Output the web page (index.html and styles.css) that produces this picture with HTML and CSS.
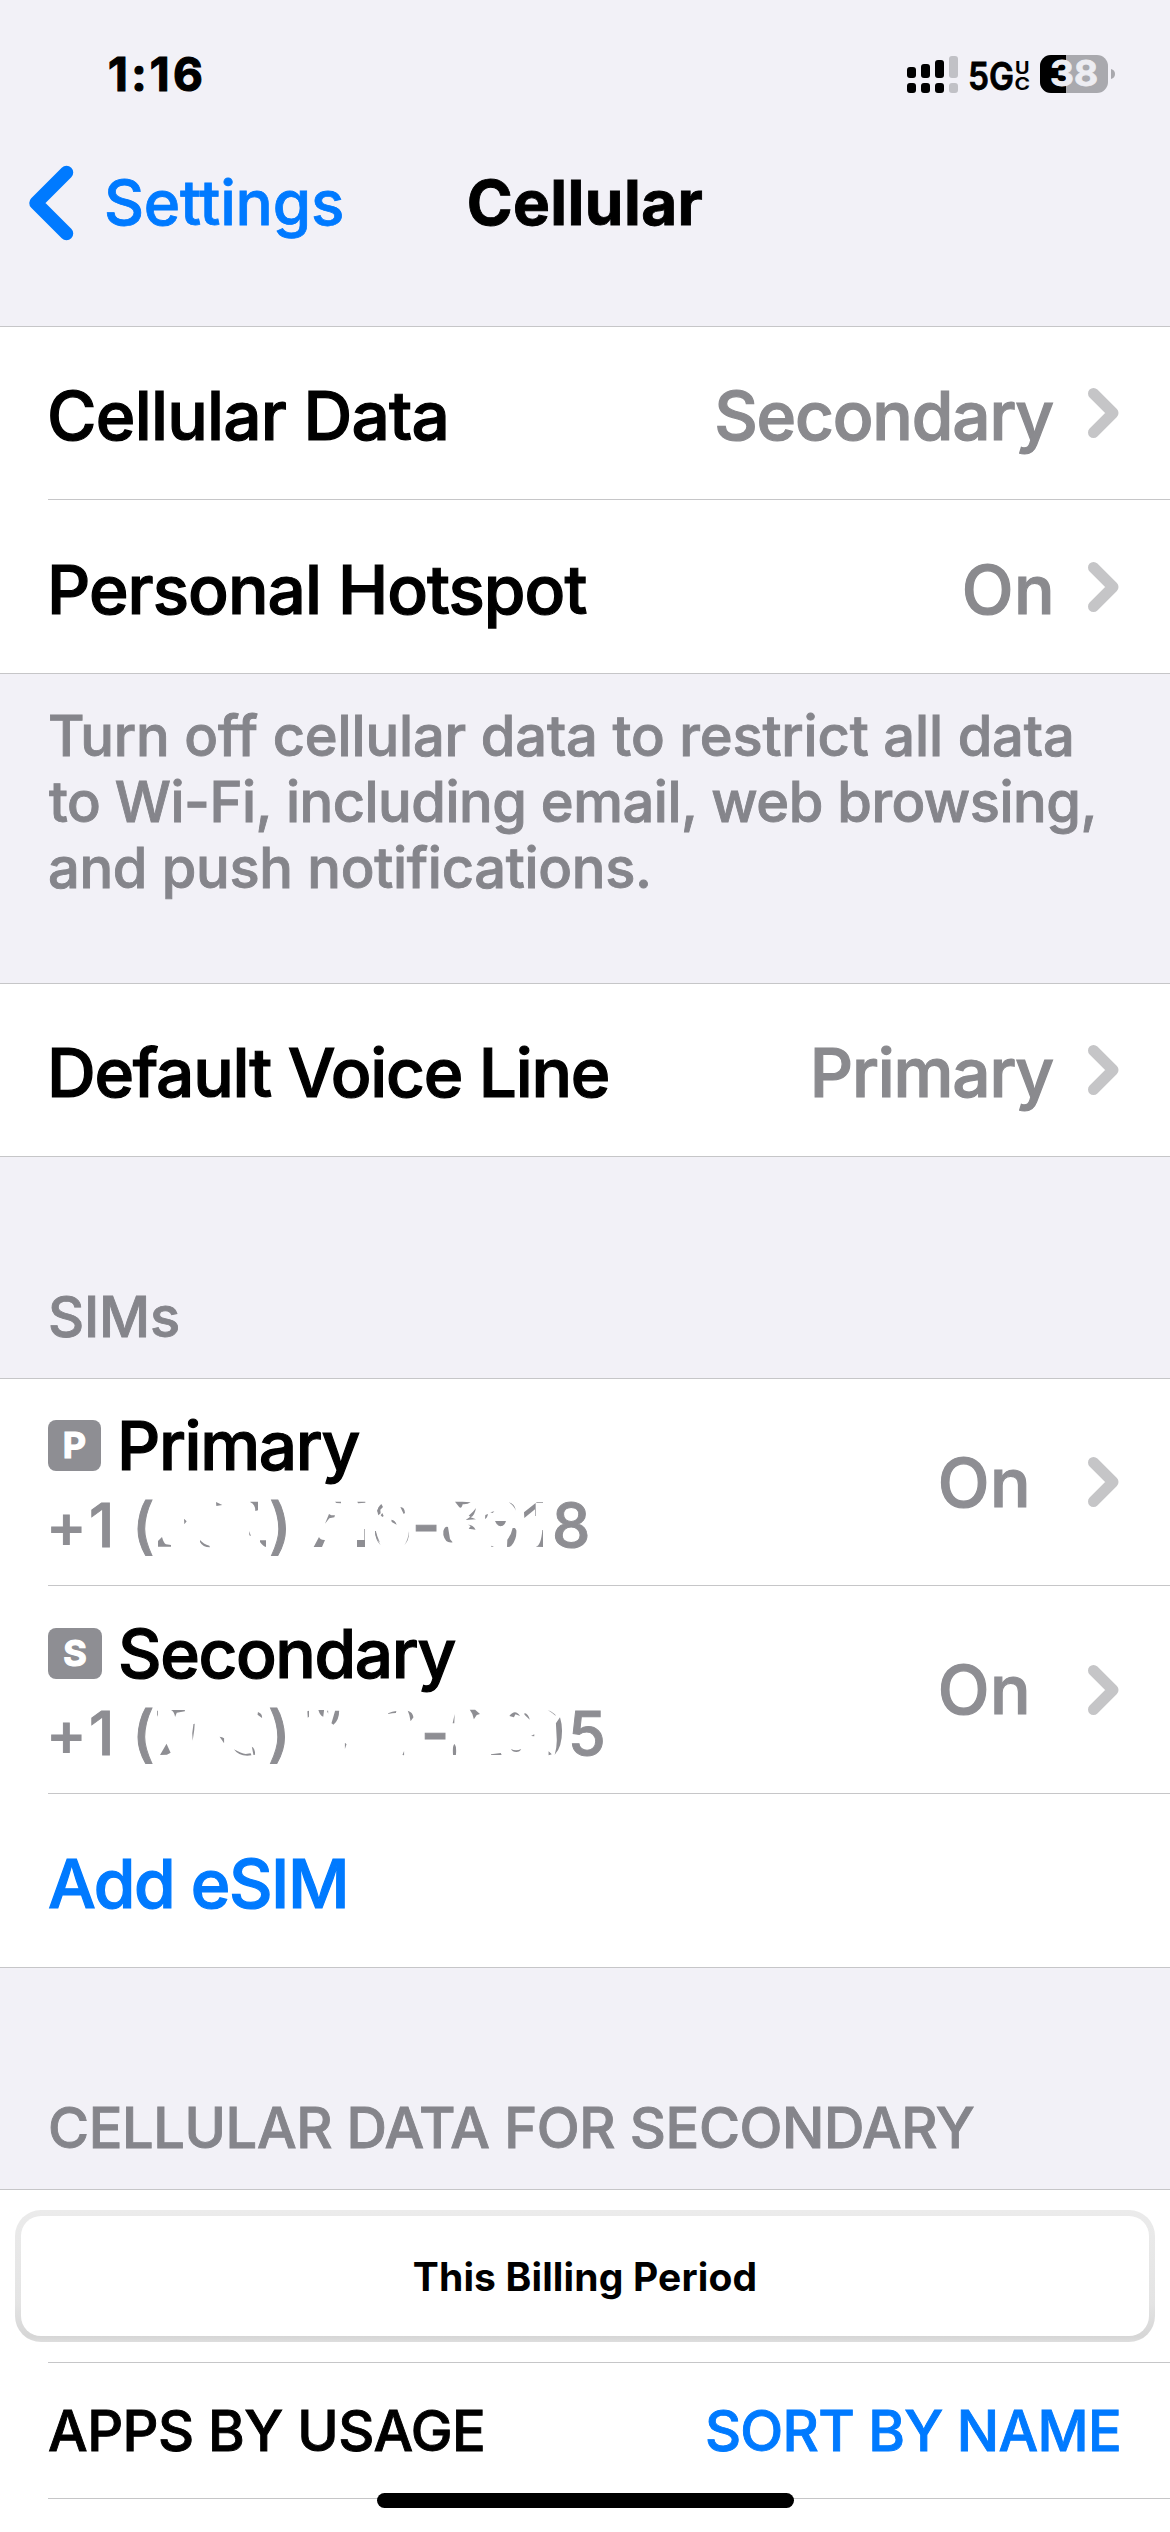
FILE: index.html
```html
<!DOCTYPE html>
<html lang="en">
<head>
<meta charset="utf-8">
<title>Cellular</title>
<link rel="stylesheet" href="styles.css">
</head>
<body>
<svg width="0" height="0" class="defs">
  <symbol id="chevron" viewBox="0 0 31 50"><path d="M5.5 5.5 25 25 5.5 44.500" fill="none" stroke="#c5c5c7" stroke-width="11" stroke-linecap="round" stroke-linejoin="round"/></symbol>
</svg>
<main class="screen">
  <header>
    <div class="status">
      <span class="time">1:16</span>
      <svg class="status-icons" width="210" height="40" viewBox="906 54 210 40">
        <g fill="#000">
          <rect x="907" y="67" width="9" height="11" rx="3"/><rect x="921" y="64" width="9" height="14" rx="3"/><rect x="935" y="60" width="9" height="18" rx="3"/>
          <rect x="907" y="83" width="9" height="10" rx="3"/><rect x="921" y="83" width="9" height="10" rx="3"/><rect x="935" y="83" width="9" height="10" rx="3"/>
        </g>
        <g fill="#c1c1c6"><rect x="949" y="56" width="9" height="22" rx="3"/><rect x="949" y="83" width="9" height="10" rx="3"/></g>
        <text x="968" y="90" class="net" textLength="46" lengthAdjust="spacingAndGlyphs">5G</text>
        <text x="1015" y="73.500" class="net-sub" textLength="14.500" lengthAdjust="spacingAndGlyphs">U</text>
        <text x="1014.500" y="89.500" class="net-sub" textLength="15.500" lengthAdjust="spacingAndGlyphs">C</text>
        <rect x="1040" y="55" width="68" height="38" rx="11" fill="#a9a9ae"/>
        <path d="M1066 55H1051a11 11 0 0 0-11 11v16a11 11 0 0 0 11 11h15z" fill="#000"/>
        <path d="M1111 69q4 1 4 5t-4 5z" fill="#a9a9ae"/>
        <text x="1050" y="86" class="level" textLength="48" lengthAdjust="spacingAndGlyphs">38</text>
      </svg>
    </div>
    <nav class="nav">
      <a class="back">
        <svg width="44" height="74" viewBox="0 0 44 74"><path d="M37.500 6.500 7 37l30.500 30.500" fill="none" stroke="#007aff" stroke-width="13.500" stroke-linecap="round" stroke-linejoin="round"/></svg>
        <span>Settings</span>
      </a>
      <h1>Cellular</h1>
      <i></i>
    </nav>
  </header>

  <section class="group">
    <div class="row line"><span class="label s1">Cellular Data</span><span class="value s2">Secondary</span><svg class="chev"><use href="#chevron"/></svg></div>
    <div class="row"><span class="label s3">Personal Hotspot</span><span class="value s4">On</span><svg class="chev"><use href="#chevron"/></svg></div>
  </section>

  <p class="note">
    <span class="n1">Turn off cellular data to restrict all data</span>
    <span class="n2">to Wi-Fi, including email, web browsing,</span>
    <span class="n3">and push notifications.</span>
  </p>

  <section class="group">
    <div class="row short"><span class="label s5">Default Voice Line</span><span class="value s2">Primary</span><svg class="chev"><use href="#chevron"/></svg></div>
  </section>

  <h2>SIMs</h2>
  <section class="group">
    <div class="row sim line">
      <div class="who">
        <div class="name"><b class="badge">P</b><span class="pn">Primary</span></div>
        <svg class="phone" width="600" height="79" viewBox="48 1485 600 79">
          <text x="46" y="1546.500" class="plus">+1</text><text x="132" y="1546.500">(</text><text x="269" y="1546.500">)</text><text x="412" y="1546.500">-</text><text x="552" y="1546.500">8</text>
          <g class="marks" transform="translate(120 1495) scale(.33333)">
            <path d="M114 155v-17l12-12q5 18 12 22l15 2v5zM240 135q10 12 28 17l2 5q-22 0-30-16zM288 21l19 9-18 3zM391 20h23v26l-8 2q0-20-15-26zM192 71l8 8-7 9zM387 108l6 15-5-2zM420 136h18v20q-8-2-18-15zM581 156l16-30q4 10 18 9l-9 21zM615 86l12-29 7 4 11 0-2 6-15 3zM645 20h18v5l-14-1zM712 20h24v3l-22 2zM711 135h22v-33h2v54h-24zM777 36l-6 12 7 7zM765 108q0 20 15 35-8-17-13-35zM134 54l4 5zM240 46l4 5zM433 71l4 4z"/>
          </g>
          <g class="marks" transform="translate(350 1495) scale(.33333)">
            <path d="M83 53q-3-13 11-26l5 9-8 8 1 11-7 6zM92 61l5-7 4 9-4 3zM124 74q12 2 16 15l-15-8zM151 36q13 0 14 18l-4 3zM75 108q0 26 17 43-14-23-14-43zM163 151q16-18 14-42-2 24-14 42zM280 108q5-16 14-12l6 36 8 10q-22 4-28-22zM315 20h22l25 2q-9 7-24 6-3 14-10 9zM356 62q16-14 22-23-4 23-16 28l16 6-31 2 14-10zM354 89q15 0 23 15l-21-3 6-8zM405 72l1-12 8-3q-2 12-9 15zM421 52l12-3-5 5zM435 78h33q-4 15-17 16-11-2-16-16zM476 22q18 4 22 25-9-18-22-25zM472 134q12-15 16-35h7l4 7q2 26-15 46-7 6-13 3zM522 52l35-28v39h-2V43l-32 26zM559 21h20v2h-20zM557 155q16-2 20-50h2v51zM424 152l8 3-8 1z"/>
          </g>
        </svg>
      </div>
      <span class="value s4">On</span><svg class="chev"><use href="#chevron"/></svg>
    </div>
    <div class="row sim second line">
      <div class="who">
        <div class="name"><b class="badge wide">S</b><span class="sn">Secondary</span></div>
        <svg class="phone" width="600" height="79" viewBox="48 1693 600 79">
          <text x="46" y="1755" class="plus">+1</text><text x="132" y="1755">(</text><text x="268" y="1755">)</text><text x="421" y="1755">-</text><text x="568" y="1755">5</text>
          <g class="marks" transform="translate(0 1580) scale(.40816 .33333)">
            <path d="M385 392l2 0v18l-2-6zM419 390h34v4l-20 4-4 13q-2-16-10-21zM471 460l3-28 3-1-1 18-4 33zM392 525l16-34 10 27-9 6zM538 470l11 20v-15l-5-3zM528 516l4 4zM573 508q18 12 29 14l12-2 2 6q-30 5-43-18zM617 500q8 4 8 24l-4 1zM632 396q11 5 10 18l-11-10zM753 394l4-2v18l-3 3zM780 390h14l-2 20q-8-3-12-20zM801 392h3v9zM812 430l9-38h10q0 28-14 42zM846 410l-5 25zM845 488l4 5-4 14zM870 415l4 3zM951 400q10-6 20-7l-1 6q-9 0-19 3zM999 392q12 4 14 20l-7 12q-2-20-7-32zM1025 486l2 15zM960 518l5 7zM986 525l4-12v13zM1109 430l5-28-1 28zM1110 525q-2-30 4-33 5 8 3 33zM1151 389h13l12 13-8 3-7 13q-2-17-10-29zM1191 405l4 2zM1218 410l-4 6zM1203 523l24-4 2 6h-26zM1248 408q14-22 26 0l-11-5-4 9zM1252 507q12 8 25 0-3 9-12 9-10 0-13-9zM1285 399q10 3 13 20l-13-15zM1301 468l8-5v6zM1344 514l8 9-8 3zM1342 390q18 10 20 18-12-12-20-18zM1362 430l10-18q5 20 5 40 0 50-18 72 6-25 5-48z"/>
          </g>
        </svg>
      </div>
      <span class="value s4">On</span><svg class="chev"><use href="#chevron"/></svg>
    </div>
    <div class="row"><a class="label s6">Add eSIM</a></div>
  </section>

  <h2 class="caps">CELLULAR DATA FOR SECONDARY</h2>
  <section class="group last">
    <div class="period"><span>This Billing Period</span></div>
    <div class="usage"><span class="u1">APPS BY USAGE</span><a class="u2">SORT BY NAME</a></div>
  </section>
  <div class="home"></div>
</main>
</body>
</html>
```
FILE: styles.css
```css
* { box-sizing: border-box; margin: 0; padding: 0; }
body { background: #f2f1f7; font-family: Inter, "Liberation Sans", sans-serif; color: #000; }
svg { display: block; flex: none; overflow: visible; }
.defs { position: absolute; }
.screen { position: relative; width: 1170px; height: 2532px; overflow: hidden; display: flex; flex-direction: column; }

.status { height: 148px; padding: 0 54px 0 108px; display: flex; align-items: center; justify-content: space-between; }
.time { font-size: 46px; font-weight: 700; letter-spacing: 3.3px; -webkit-text-stroke: 1.2px; }
.net { font-size: 38px; font-weight: 600; stroke: #000; stroke-width: .8px; }
.net-sub { font-size: 17px; font-weight: 700; }
.level { font-size: 35px; font-weight: 700; fill: #ededf2; stroke: #ededf2; stroke-width: .8px; }

.nav { height: 178px; padding: 0 29px; display: grid; grid-template-columns: 1fr auto 1fr; align-items: start; line-height: 110px; }
.back { display: flex; align-items: center; gap: 31px; color: #007aff; font-size: 62px; font-weight: 500; letter-spacing: -.2px; -webkit-text-stroke: .8px; }
h1 { font-size: 62px; font-weight: 700; letter-spacing: .45px; -webkit-text-stroke: .9px; }

.group { background: #fff; border-top: 1px solid #c6c6c8; border-bottom: 1px solid #c6c6c8; padding-left: 48px; flex: none; }
.row { height: 173px; padding-right: 51px; display: flex; align-items: center; font-size: 67.5px; font-weight: 500; -webkit-text-stroke: 1.2px; }
.row.short { height: 172px; }
.line { border-bottom: 1px solid #c6c6c8; }
.label { margin-left: -1px; padding-top: 5px; }
a.label { margin-left: 0; color: #007aff; }
.value { margin-left: auto; margin-right: 35px; padding-top: 5px; color: #8a8a8e; }
.value.s4 { margin-right: 33px; }
.chev { width: 31px; height: 50px; }
.s1 { letter-spacing: -.75px; }
.s2 { letter-spacing: -1.2px; }
.s3 { letter-spacing: -.97px; }
.s4 { letter-spacing: .4px; }
.s5 { letter-spacing: -1.25px; }
.s6 { letter-spacing: -1.5px; }

.note { height: 309px; padding: 29px 0 0 48px; font-size: 56px; font-weight: 500; line-height: 66px; color: #85858b; -webkit-text-stroke: .9px; flex: none; }
.note span { display: block; white-space: nowrap; }
.n1 { letter-spacing: -.16px; }
.n2 { letter-spacing: -.5px; padding-left: 1px; }
.n3 { letter-spacing: -.31px; }

h2 { height: 221px; padding: 0 0 28px 48px; display: flex; align-items: flex-end; font-size: 56px; font-weight: 500; line-height: 66px; letter-spacing: -.2px; color: #85858b; -webkit-text-stroke: .9px; flex: none; }
h2.caps { letter-spacing: -.4px; }

.sim { height: 207px; }
.sim.second { height: 208px; }
.who { height: 158px; align-self: flex-start; margin-top: 27px; }
.second .who { margin-top: 28px; }
.sim .value { margin-right: 57px; padding-top: 0; color: #8e8e93; }
.name { height: 79px; display: flex; align-items: center; line-height: 79px; }
.badge { width: 53px; height: 51px; margin-right: 16px; border-radius: 8px; background: #8e8e93; color: #fff; font-size: 36px; font-weight: 700; line-height: 51px; text-align: center; }
.badge.wide { width: 54px; }
.pn { letter-spacing: -1.35px; }
.sn { letter-spacing: -1.42px; }
.phone { font-size: 61px; font-weight: 500; fill: #8e8e93; }
.phone text { stroke: #8e8e93; stroke-width: 1px; -webkit-text-stroke: 0; }
.plus { letter-spacing: 2.3px; }

.last { border-bottom: 0; height: 343px; padding-left: 0; }
.period { margin: 20px 15px; height: 132px; padding: 6px; border-radius: 26px; background: linear-gradient(#ebebeb, #e4e4e4 70%, #d6d6d6 96%, #dedede); }
.period span { display: flex; align-items: center; justify-content: center; height: 120px; border-radius: 20px; background: #fff; font-size: 39px; font-weight: 700; letter-spacing: .15px; }
.usage { height: 137px; margin-left: 48px; padding: 0 49px 0 0; border: solid #c6c6c8; border-width: 1px 0; display: flex; align-items: center; justify-content: space-between; font-size: 56px; font-weight: 500; -webkit-text-stroke: .9px; }
.u1 { letter-spacing: -.52px; }
.u2 { letter-spacing: -.7px; color: #007aff; }
.home { position: absolute; left: 377px; top: 2493px; width: 417px; height: 15px; border-radius: 8px; background: #000; }
```
